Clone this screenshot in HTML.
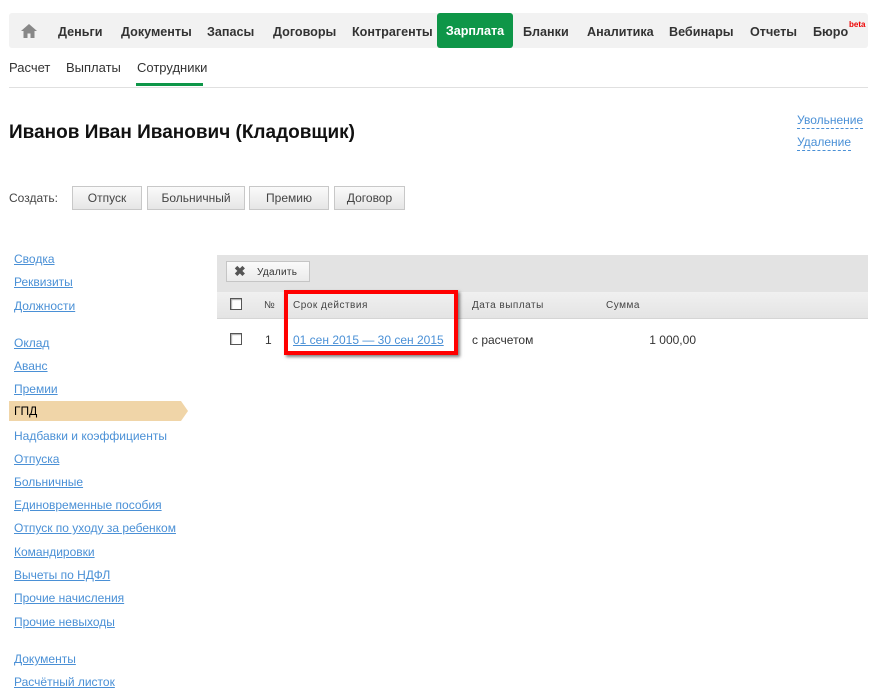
<!DOCTYPE html>
<html><head><meta charset="utf-8"><style>
body{margin:0;width:881px;height:700px;background:#fff;font-family:"Liberation Sans",Arial,sans-serif;position:relative;overflow:hidden;color:#333}
.a{position:absolute;white-space:nowrap}
.nav{left:9px;top:13px;width:859px;height:35px;background:#f2f2f2;border-radius:3px}
.ni{position:absolute;top:1px;line-height:36px;font-weight:bold;font-size:12.6px;color:#333}
.sub{font-size:13px;color:#333;top:60px}
.lk{font-size:12px;color:#4a90d6;text-decoration:underline;left:14px;margin-top:1px}
.btn{top:186px;line-height:22px;background:linear-gradient(#fafafa,#e6e6e6);border:1px solid #c8c8c8;font-size:12px;text-align:center;color:#444;box-sizing:border-box;height:24px}
.cb{width:10px;height:10px;border:1px solid #555;background:#fff;box-shadow:inset 1px 1px 1px #aaa}
.th{font-size:10px;letter-spacing:0.5px;color:#444;top:300px}
</style></head><body>
<div class="a nav">
 <svg style="position:absolute;left:11px;top:10px" width="18" height="16" viewBox="0 0 18 16"><path d="M9 1 L1 8 H3.5 V15 H7.5 V10.5 H10.5 V15 H14.5 V8 H17 Z" fill="#888"/></svg>
 <span class="ni" style="left:49px">Деньги</span>
 <span class="ni" style="left:112px">Документы</span>
 <span class="ni" style="left:198px">Запасы</span>
 <span class="ni" style="left:264px">Договоры</span>
 <span class="ni" style="left:343px">Контрагенты</span>
 <span class="ni" style="left:428px;top:0;line-height:37px;width:76px;height:35px;background:#0e9648;color:#fff;border-radius:3px;text-align:center">Зарплата</span>
 <span class="ni" style="left:514px">Бланки</span>
 <span class="ni" style="left:578px">Аналитика</span>
 <span class="ni" style="left:660px">Вебинары</span>
 <span class="ni" style="left:741px">Отчеты</span>
 <span class="ni" style="left:804px">Бюро</span>
 <span style="position:absolute;left:840px;top:7px;font-size:8px;color:#e00;font-weight:bold">beta</span>
</div>
<span class="a sub" style="left:9px">Расчет</span>
<span class="a sub" style="left:66px">Выплаты</span>
<span class="a sub" style="left:137px">Сотрудники</span>
<div class="a" style="left:136px;top:83px;width:67px;height:3px;background:#0e9648"></div>
<div class="a" style="left:9px;top:87px;width:859px;height:1px;background:#e0e0e0"></div>
<div class="a" style="left:9px;top:122px;font-size:19px;font-weight:bold;color:#111">Иванов Иван Иванович (Кладовщик)</div>
<span class="a" style="left:797px;top:112px;font-size:12px;color:#4a90d6;border-bottom:1px dashed #4a90d6;line-height:16px">Увольнение</span>
<span class="a" style="left:797px;top:134px;font-size:12px;color:#4a90d6;border-bottom:1px dashed #4a90d6;line-height:16px">Удаление</span>
<span class="a" style="left:9px;top:191px;font-size:12px;color:#444">Создать:</span>
<div class="a btn" style="left:72px;width:70px">Отпуск</div>
<div class="a btn" style="left:147px;width:98px">Больничный</div>
<div class="a btn" style="left:249px;width:80px">Премию</div>
<div class="a btn" style="left:334px;width:71px">Договор</div>
<span class="a lk" style="top:251px">Сводка</span>
<span class="a lk" style="top:274px">Реквизиты</span>
<span class="a lk" style="top:298px">Должности</span>
<span class="a lk" style="top:335px">Оклад</span>
<span class="a lk" style="top:358px">Аванс</span>
<span class="a lk" style="top:381px">Премии</span>
<svg class="a" style="left:9px;top:401px" width="180" height="20"><path d="M0 0 H172 L179 10 L172 20 H0 Z" fill="#f0d5a8"/></svg>
<span class="a" style="left:14px;top:404px;font-size:12px;color:#000">ГПД</span>
<span class="a lk" style="top:428px;text-decoration:none">Надбавки и коэффициенты</span>
<span class="a lk" style="top:451px">Отпуска</span>
<span class="a lk" style="top:474px">Больничные</span>
<span class="a lk" style="top:497px">Единовременные пособия</span>
<span class="a lk" style="top:520px">Отпуск по уходу за ребенком</span>
<span class="a lk" style="top:544px">Командировки</span>
<span class="a lk" style="top:567px">Вычеты по НДФЛ</span>
<span class="a lk" style="top:590px">Прочие начисления</span>
<span class="a lk" style="top:614px">Прочие невыходы</span>
<span class="a lk" style="top:651px">Документы</span>
<span class="a lk" style="top:674px">Расчётный листок</span>
<div class="a" style="left:217px;top:255px;width:651px;height:37px;background:#e3e3e3"></div>
<div class="a" style="left:217px;top:292px;width:651px;height:26px;background:linear-gradient(#f0f0f0,#e4e4e4);border-bottom:1px solid #d5d5d5"></div>
<div class="a" style="left:226px;top:261px;width:84px;height:21px;background:linear-gradient(#fafafa,#ebebeb);border:1px solid #c5c5c5;box-sizing:border-box;font-size:10px;line-height:19px;color:#333;letter-spacing:0.3px"><span style="position:absolute;left:7px;top:0;font-size:14px;font-weight:bold;color:#555">✖</span><span style="position:absolute;left:30px;top:1px">Удалить</span></div>
<div class="a cb" style="left:230px;top:298px"></div>
<span class="a th" style="left:264px">№</span>
<span class="a th" style="left:293px">Срок действия</span>
<span class="a th" style="left:472px">Дата выплаты</span>
<span class="a th" style="left:606px">Сумма</span>
<div class="a cb" style="left:230px;top:333px"></div>
<span class="a" style="left:265px;top:333px;font-size:12px;color:#333">1</span>
<span class="a" style="left:293px;top:333px;font-size:12px;color:#4a90d6;text-decoration:underline">01 сен 2015 — 30 сен 2015</span>
<span class="a" style="left:472px;top:333px;font-size:12px;color:#333">с расчетом</span>
<span class="a" style="left:596px;width:100px;text-align:right;top:333px;font-size:12px;color:#333">1 000,00</span>
<div class="a" style="left:284px;top:290px;width:174px;height:65px;border:4px solid #f00;box-sizing:border-box;box-shadow:2px 2px 3px rgba(0,0,0,0.5)"></div>
</body></html>
